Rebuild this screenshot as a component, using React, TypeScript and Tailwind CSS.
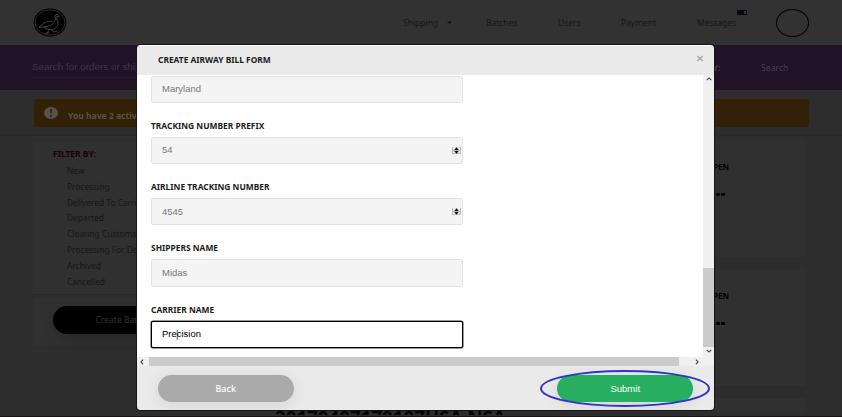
import React from "react";

type FieldProps = { label?: string; value: string; number?: boolean; focused?: boolean };

function Stepper() {
  return (
    <svg width="11" height="9" viewBox="0 0 11 9" className="shrink-0">
      <rect x="1" y="1" width="9" height="7" fill="#ececec" />
      <path d="M1.500 1v7M9.500 1v7M1 4.500h9M1 7.500h9" stroke="#b5b5b5" strokeWidth=".9" fill="none" />
      <path d="M3.200 4 5.500 1.300 7.800 4zM3.200 5l2.300 2.700L7.800 5z" fill="#111" />
    </svg>
  );
}

function Field({ label, value, number, focused }: FieldProps) {
  return (
    <div>
      {label && (
        <div className="flex h-[34px] items-end pb-[5px]">
          <span className="inline-block origin-left scale-x-[1.05] whitespace-nowrap text-[8px] font-bold leading-[12px] text-[#1c1c1c]">{label}</span>
        </div>
      )}
      <div
        className={
          focused
            ? "flex h-[27.3px] w-[312.5px] items-center rounded-[2px] border border-black bg-white pl-[10.5px] shadow-[0_0_0_0.5px_#333]"
            : "flex h-[27.3px] w-[312.5px] items-center justify-between rounded-[2px] border border-[#e2e2e2] bg-[#f4f4f4] pl-[10px]"
        }
      >
        <span
          className={`inline-block origin-left scale-x-[1.13] font-['Liberation_Sans',sans-serif] text-[8.4px] leading-[12px] ${focused ? "text-black" : "text-[#777]"}`}
        >
          {focused ? (
            <>
              Pre<i className="-mx-[0.5px] inline-block h-[10px] w-px bg-[#777] align-middle" />cision
            </>
          ) : (
            value
          )}
        </span>
        {number && <Stepper />}
      </div>
    </div>
  );
}

function Chevron({ turn }: { turn: string }) {
  return (
    <svg width="6" height="6" viewBox="0 0 6 6" className={turn}>
      <path d="M.7 4.1 3 1.9l2.3 2.2" fill="none" stroke="#444" strokeWidth="1.1" />
    </svg>
  );
}

function GooseLogo() {
  return (
    <svg width="34" height="29" viewBox="0 0 34 29">
      <ellipse cx="17" cy="14.5" rx="16.3" ry="14" fill="#000" />
      <ellipse cx="17" cy="14.5" rx="15" ry="12.6" fill="none" stroke="#3d3d3d" strokeWidth=".7" />
      <path
        d="M26.200 8.800l-2.500-.4c-.8 1.800 1.300 4 1.300 6.800 0 4-3.500 6.300-7 6.500-3 .2-5-.8-6.500-2.200l3-.8M6 19.500l4-3.500c2.500-2.400 5-3 8-2.700 2.300.1 4.200.1 4.700-1.300.4-1.400-.7-2.200-.7-3.800 0-2.500 3.300-3 4.200.6M6 19.500l6.500-1c3 0 5.500-1 8.500-3.500M16.500 21.500l-2.500 3.800M19.500 21.500l1 2.700 4-1.200M12 25.500l4.500-.7"
        fill="none"
        stroke="#5a5a5a"
        strokeWidth=".7"
      />
    </svg>
  );
}

const filters = ["New", "Processing", "Delivered To Carrier", "Departed", "Clearing Customs", "Processing For Delivery", "Archived", "Cancelled"];

function NavText({ children }: { children: React.ReactNode }) {
  return <span className="inline-block origin-left scale-x-[1.02]">{children}</span>;
}

function OrderCard() {
  return (
    <div className="flex h-[119px] w-[212px] shrink-0 flex-col items-end border border-[#2c2c2c] bg-[#303030] pr-[76px] pt-[21px] text-[8px] font-bold leading-[12px] text-black">
      <span>OPEN</span>
      <span className="mr-[4px] mt-[20px] flex gap-[1px]">
        {[0, 1, 2].map((n) => (
          <i key={n} className="h-[3px] w-[4px] rounded-[1px] bg-black" />
        ))}
      </span>
    </div>
  );
}

function Page() {
  return (
    <div className="flex h-[417px] flex-col bg-[#2d2d2d]">
      <header className="flex h-[45px] shrink-0 items-center bg-[#323232] pl-[33px] text-[8.3px] text-[#161616]">
        <GooseLogo />
        <nav className="flex h-full flex-1 items-center">
          <div className="ml-[336px] flex items-center pt-[2px]">
            <span className="w-[42px] shrink-0"><NavText>Shipping</NavText></span>
            <svg width="7" height="4" className="ml-[1px] mt-[-2px] shrink-0"><path d="M.8.5h5.400L3.500 3.300z" fill="#161616" /></svg>
            <span className="ml-[33px] w-[72px] shrink-0"><NavText>Batches</NavText></span>
            <span className="w-[63px] shrink-0"><NavText>Users</NavText></span>
            <span className="w-[76px] shrink-0"><NavText>Payment</NavText></span>
            <span className="relative w-[79px] shrink-0">
              <NavText>Messages</NavText>
              <i className="absolute left-[40px] top-[-7px] flex h-[5px] w-[10px] items-center justify-end bg-[#07090d] pr-px"><b className="h-[3px] w-[2px] bg-[#263349]" /></i>
            </span>
          </div>
          <span className="h-[28px] w-[33px] shrink-0 rounded-[50%] border border-black" />
        </nav>
      </header>

      <div className="flex h-[45px] shrink-0 items-center bg-[#211228] text-[8.5px] text-[#474047]">
        <div className="ml-[32px] flex h-[20px] w-[280px] items-center border-b border-[#291a30] pt-[1px] font-['Liberation_Sans',sans-serif] text-[#423448]">
          <span className="inline-block origin-left scale-x-[1.16] whitespace-nowrap">Search for orders or shipments</span>
        </div>
        <span className="ml-auto w-[54px] pt-[1px] font-bold">BY:</span>
        <span className="mr-[54px] pt-[1px]"><span className="inline-block origin-left scale-x-[1.02]">Search</span></span>
      </div>

      <div className="h-[46px] shrink-0 border-b border-[#292929] pl-[34px] pr-[33px] pt-[9px]">
        <div className="flex h-[28px] items-center rounded-[3px] bg-[#332107] pl-[10px] text-[8.4px] font-bold text-[#5a5142]">
          <svg width="14" height="12" viewBox="0 0 14 12">
            <ellipse cx="7" cy="6" rx="7" ry="6" fill="#585248" />
            <path d="M6 2h2l-.3 4.500H6.300zM6 8h2v1.700H6z" fill="#332107" />
          </svg>
          <span className="ml-[10px] mt-[7px] inline-block origin-left scale-x-[1.02]">You have 2 active orders</span>
        </div>
      </div>

      <main className="flex flex-1 overflow-hidden">
        <aside className="ml-[33px] mt-[6px] w-[190px] shrink-0 text-[8.2px] text-[#171717]">
          <div className="h-[153px] border-b border-[#292929] bg-[#303030] pl-[20px] pt-[6px]">
            <h2 className="w-fit origin-left scale-x-[1.055] text-[8px] font-bold leading-[11px] text-[#160206]">FILTER BY:</h2>
            <ul className="ml-[14px] mt-[4px]">
              {filters.map((text) => (
                <li key={text} className="flex h-[15.9px] items-center"><span className="inline-block origin-left scale-x-[1.02] whitespace-nowrap">{text}</span></li>
              ))}
            </ul>
          </div>
          <div className="mt-[3px] h-[48px] bg-[#303030] pl-[20px] pt-[8px]">
            <div className="flex h-[28px] w-[137px] items-center justify-center rounded-full bg-black pt-[1px] text-[8.4px] text-[#333] shadow-lg">
              <span className="inline-block scale-x-[1.02]">Create Batch</span>
            </div>
          </div>
        </aside>
        <h1 className="mb-[2px] ml-[52px] mt-auto h-[5px] w-[240px] origin-left scale-x-[1.07] overflow-hidden whitespace-nowrap text-[17.5px] font-bold leading-[14px] text-[#050505]">20170407170107USA NSA</h1>
        <section className="ml-auto mr-[36px] mt-[3px] flex flex-col gap-[10px]">
          <OrderCard />
          <OrderCard />
          <div className="h-[16px] border border-[#2c2c2c] bg-[#303030]" />
        </section>
      </main>
    </div>
  );
}

export default function App() {
  return (
    <div className="relative h-[417px] w-[842px] overflow-hidden font-['Noto_Sans',sans-serif]">
      <Page />
      <div className="absolute bottom-0 left-0 h-px w-full bg-[#171416]" />
      <div className="absolute left-[137px] top-[45px] flex h-[365px] w-[577px] flex-col overflow-hidden rounded-[3px] bg-white outline outline-[#151515]">
        <div className="flex h-[30px] shrink-0 items-center justify-between border-t border-white bg-[#eaeaea] pb-[2px] pl-[21px] pr-[10px]">
          <h2 className="origin-left scale-x-[1.025] text-[8.2px] font-bold leading-[12px] text-[#1c1c1c]">CREATE AIRWAY BILL FORM</h2>
          <svg width="8" height="7" viewBox="0 0 8 7" className="mt-[-3px]"><path d="m1.300 1 5.400 5M6.700 1 1.300 6" stroke="#aaa" strokeWidth="1.7" /></svg>
        </div>
        <div className="flex h-[282px] shrink-0">
          <div className="w-[566px] shrink-0 pl-[13.5px] pt-[0.5px]">
            <Field value="Maryland" />
            <Field label="TRACKING NUMBER PREFIX" value="54" number />
            <Field label="AIRLINE TRACKING NUMBER" value="4545" number />
            <Field label="SHIPPERS NAME" value="Midas" />
            <Field label="CARRIER NAME" value="Precision" focused />
          </div>
          <div className="flex flex-1 flex-col items-center bg-[#f0f0f0] pt-[1px]">
            <Chevron turn="rotate-0" />
            <div className="mt-[186px] h-[79px] w-full bg-[#cbcbcb]" />
            <Chevron turn="mt-[1px] rotate-180" />
          </div>
        </div>
        <div className="flex h-[9px] shrink-0 items-center bg-[#f0f0f0] pl-[2px]">
          <Chevron turn="-rotate-90" />
          <div className="ml-[4px] h-full w-[530px] bg-[#cbcbcb]" />
          <Chevron turn="ml-[15px] rotate-90" />
        </div>
        <footer className="flex flex-1 items-start justify-between bg-[#eaeaea] px-[21px] pt-[9px] text-[8.5px] text-white">
          <button className="h-[27px] w-[136px] rounded-full bg-[#aaa] pt-[1px] shadow-[0_3px_14px_rgba(60,60,90,0.12)]"><span className="inline-block scale-x-[1.06] font-medium">Back</span></button>
          <button className="h-[27px] w-[136px] rounded-full bg-[#27ae60] pt-[1px] font-['Liberation_Sans',sans-serif] shadow-[0_3px_14px_rgba(60,60,90,0.12)]"><span className="inline-block scale-x-[1.12]">Submit</span></button>
        </footer>
        <svg width="172" height="38" className="absolute left-[402px] top-[325px]"><ellipse cx="86" cy="18.500" rx="84" ry="17.500" fill="none" stroke="#2f35c5" strokeWidth="2" /></svg>
      </div>
    </div>
  );
}
